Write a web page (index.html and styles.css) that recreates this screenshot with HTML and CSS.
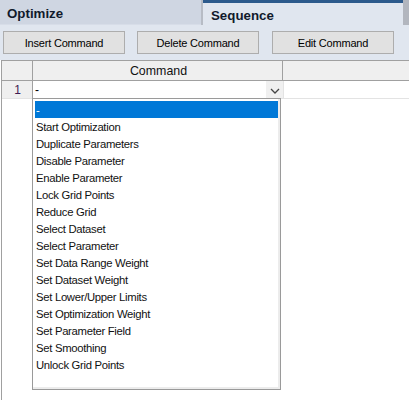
FILE: index.html
```html
<!DOCTYPE html>
<html>
<head>
<meta charset="utf-8">
<link rel="stylesheet" href="styles.css">
</head>
<body>
<div class="page">
  <div class="tabs">
    <div class="tab tab-optimize">Optimize</div>
    <div class="tab-sep"></div>
    <div class="tab tab-sequence">Sequence</div>
    <div class="tab-scroll"></div>
  </div>
  <div class="toolbar">
    <button class="btn">Insert Command</button>
    <button class="btn">Delete Command</button>
    <button class="btn btn-last">Edit Command</button>
  </div>
  <div class="grid">
    <div class="grid-row grid-header">
      <div class="rh"></div>
      <div class="c1 head-cell">Command</div>
      <div class="c2"></div>
    </div>
    <div class="grid-row grid-data">
      <div class="rh row-num">1</div>
      <div class="c1 cell-edit"><span class="cell-val">-</span><span class="dd-btn"><svg width="10" height="6" viewBox="0 0 10 6"><path d="M1 1 L5 5 L9 1" fill="none" stroke="#444" stroke-width="1.3"/></svg></span></div>
      <div class="c2"></div>
    </div>
    <div class="dropdown">
      <div class="item selected">-</div>
      <div class="item">Start Optimization</div>
      <div class="item">Duplicate Parameters</div>
      <div class="item">Disable Parameter</div>
      <div class="item">Enable Parameter</div>
      <div class="item">Lock Grid Points</div>
      <div class="item">Reduce Grid</div>
      <div class="item">Select Dataset</div>
      <div class="item">Select Parameter</div>
      <div class="item">Set Data Range Weight</div>
      <div class="item">Set Dataset Weight</div>
      <div class="item">Set Lower/Upper Limits</div>
      <div class="item">Set Optimization Weight</div>
      <div class="item">Set Parameter Field</div>
      <div class="item">Set Smoothing</div>
      <div class="item">Unlock Grid Points</div>
    </div>
  </div>
</div>
</body>
</html>
```
FILE: styles.css
```css
* { box-sizing: border-box; }
html, body { margin: 0; padding: 0; background: #fff; }
body { font-family: "Liberation Sans", Arial, sans-serif; }
.page { width: 409px; height: 400px; overflow: hidden; }

.tabs { display: flex; height: 25px; }
.tab {
  font-weight: bold; font-size: 13.3px; color: #111a2c;
  display: flex; align-items: center; padding-left: 7px;
}
.tab-optimize { width: 201px; background: #cfd6e2; border-bottom: 1px solid #d7dde8; padding-top: 2px; }
.tab-sep { width: 2px; background: #b7bcc5; }
.tab-sequence { width: 200px; background: #e0e6ef; border-top: 3px solid #2c5a8c; padding-left: 8px; padding-top: 2px; }
.tab-scroll { width: 6px; background: #b2b6be; }

.toolbar {
  height: 35px; background: #e0e6ef;
  display: flex; gap: 12px; padding: 6px 0 0 3px;
}
.btn {
  width: 122px; height: 23px; margin: 0;
  background: #e1e1e1; border: 1px solid #adadad;
  font-family: "Liberation Sans", Arial, sans-serif;
  font-size: 11px; letter-spacing: -0.2px; color: #000;
  padding: 0;
}
.btn-last { margin-left: 1px; }

.grid {
  position: relative; height: 340px;
  margin-left: 1px; border-left: 1px solid #a0a0a0; border-top: 1px solid #a0a0a0;
}
.grid-row { display: flex; }
.grid-header { height: 20px; border-bottom: 1px solid #a0a0a0; background: #efefef; }
.grid-data { height: 18px; border-bottom: 1px solid #e3e3e3; }
.rh { width: 31px; border-right: 1px solid #a0a0a0; background: #efefef; }
.c1 { width: 250px; border-right: 1px solid #a0a0a0; }
.c2 { flex: 1; }
.grid-data .c1 { border-right: none; width: 250px; }
.grid-data .c2 { border-left: 1px solid #e3e3e3; }
.head-cell {
  font-size: 12.4px; color: #111; display: flex; align-items: center; justify-content: center;
  padding-left: 2px; padding-top: 1px;
}
.row-num {
  font-size: 12px; color: #3e1c52; display: flex; align-items: center; justify-content: center;
  padding-left: 1px;
}
.cell-edit { display: flex; align-items: center; justify-content: space-between; font-size: 12px; background: #fff; }
.cell-val { padding-left: 2px; }
.dd-btn {
  width: 17px; height: 17px; background: #f0f0f0;
  display: flex; align-items: center; justify-content: center; padding-top: 2px;
}

.dropdown {
  position: absolute; left: 30px; top: 37px;
  width: 249px; height: 292px;
  background: #fff; border: 1px solid #9a9a9a;
  box-shadow: inset -2px -2px 0 #ececec;
  padding: 2px;
}
.item {
  height: 17px; line-height: 17px; font-size: 11.3px; letter-spacing: -0.3px;
  color: #111; padding: 1px 0 0 1px; white-space: nowrap;
}
.item.selected { background: #0078d7; color: #fff; width: 243px; }
```
